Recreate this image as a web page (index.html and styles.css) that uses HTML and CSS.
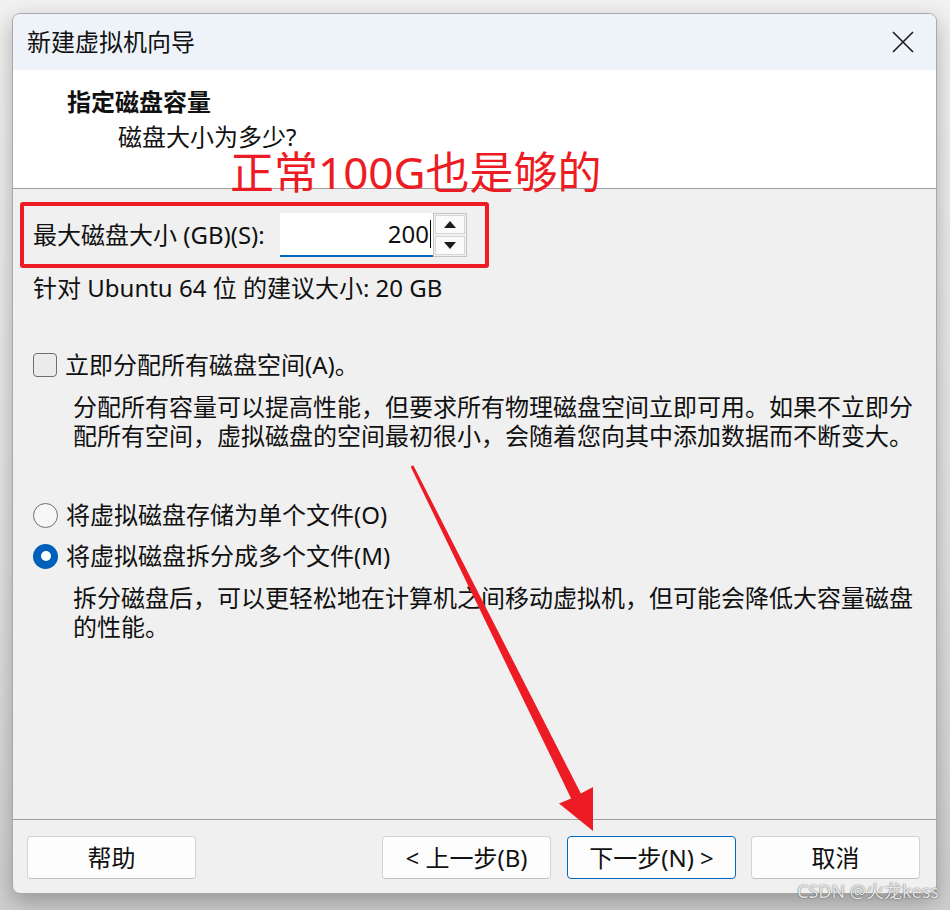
FILE: index.html
```html
<!DOCTYPE html>
<html lang="zh-CN">
<head>
<meta charset="utf-8">
<title>新建虚拟机向导</title>
<link rel="stylesheet" href="styles.css">
</head>
<body>
<div class="window">
  <div class="titlebar">
    <div class="title">新建虚拟机向导</div>
    <div class="close">
      <svg width="22" height="22" viewBox="0 0 22 22"><path d="M1 1 L21 21 M21 1 L1 21" stroke="#1b1b1b" stroke-width="1.6" fill="none"/></svg>
    </div>
  </div>
  <div class="header">
    <div class="heading">指定磁盘容量</div>
    <div class="subheading">磁盘大小为多少?</div>
  </div>
  <div class="content">
    <div class="sizebox">
      <div class="size-label">最大磁盘大小 (GB)(S):</div>
      <div class="size-input"><span class="value">200</span><span class="caret"></span></div>
      <div class="spinner">
        <div class="spin-btn"><svg width="12" height="7" viewBox="0 0 12 7"><path d="M6 0 L12 7 L0 7 Z" fill="#1b1b1b"/></svg></div>
        <div class="spin-btn"><svg width="12" height="7" viewBox="0 0 12 7"><path d="M0 0 L12 0 L6 7 Z" fill="#1b1b1b"/></svg></div>
      </div>
    </div>
    <div class="hint">针对 Ubuntu 64 位 的建议大小: 20 GB</div>
    <div class="option option-check">
      <span class="checkbox"></span>
      <span class="option-label">立即分配所有磁盘空间(A)。</span>
    </div>
    <div class="desc">
      <div class="desc-line">分配所有容量可以提高性能，但要求所有物理磁盘空间立即可用。如果不立即分</div>
      <div class="desc-line">配所有空间，虚拟磁盘的空间最初很小，会随着您向其中添加数据而不断变大。</div>
    </div>
    <div class="option option-radio1">
      <span class="radio"></span>
      <span class="option-label">将虚拟磁盘存储为单个文件(O)</span>
    </div>
    <div class="option option-radio2">
      <span class="radio radio-on"><span class="dot"></span></span>
      <span class="option-label">将虚拟磁盘拆分成多个文件(M)</span>
    </div>
    <div class="desc">
      <div class="desc-line">拆分磁盘后，可以更轻松地在计算机之间移动虚拟机，但可能会降低大容量磁盘</div>
      <div class="desc-line">的性能。</div>
    </div>
  </div>
  <div class="footer">
    <button class="btn">帮助</button>
    <div class="spacer"></div>
    <button class="btn">&lt; 上一步(B)</button>
    <button class="btn btn-primary">下一步(N) &gt;</button>
    <button class="btn btn-last">取消</button>
  </div>
</div>
<div class="note">正常100G也是够的</div>
<svg class="arrow" width="950" height="910" viewBox="0 0 950 910">
  <polygon points="413.3,465.3 580.9,793.6 593,787 593,831 559,803.5 571.1,798.4 410.7,466.7" fill="#ed1c24"/>
</svg>
<div class="watermark">CSDN @火龙kess</div>
</body>
</html>
```

FILE: styles.css
```css
html, body {
  margin: 0;
  padding: 0;
  width: 950px;
  height: 910px;
  overflow: hidden;
}
body {
  position: relative;
  background: linear-gradient(#f1f1f1, #e2e2e2 60%, #cfcfcf);
  font-family: "Noto Sans", "Noto Sans CJK SC", sans-serif;
  color: #111;
}
.window {
  box-sizing: border-box;
  margin: 13px 0 0 12px;
  width: 925px;
  height: 881px;
  border: 1px solid #a9a9a9;
  border-radius: 8px;
  overflow: hidden;
  background: #f0f0f0;
  display: flex;
  flex-direction: column;
  box-shadow: 0 8px 22px rgba(0, 0, 0, 0.28);
}
.titlebar {
  height: 56px;
  flex: 0 0 56px;
  background: #eef3f9;
  display: flex;
  align-items: center;
}
.title {
  padding-left: 14px;
  font-size: 24px;
  line-height: 30px;
  flex: 1;
}
.close {
  width: 66px;
  height: 56px;
  display: flex;
  align-items: center;
  justify-content: center;
}
.header {
  box-sizing: border-box;
  flex: 0 0 119px;
  height: 119px;
  background: #fff;
  border-bottom: 1px solid #a0a0a0;
  padding-top: 17px;
}
.heading {
  padding-left: 54px;
  font-size: 24px;
  line-height: 30px;
  font-weight: 700;
}
.subheading {
  margin-top: 5px;
  padding-left: 105px;
  font-size: 24px;
  line-height: 30px;
}
.content {
  flex: 1;
  font-size: 24px;
}
.sizebox {
  box-sizing: border-box;
  margin: 13px 0 0 7px;
  width: 469px;
  height: 66px;
  border: 4px solid #ed1c24;
  border-radius: 3px;
  display: flex;
  align-items: center;
  padding-left: 9px;
}
.size-label {
  flex: 0 0 247px;
  line-height: 30px;
}
.size-input {
  box-sizing: border-box;
  width: 153px;
  height: 44px;
  background: #fff;
  border-bottom: 2px solid #0067c0;
  display: flex;
  align-items: center;
  justify-content: flex-end;
  padding-right: 2px;
}
.value {
  line-height: 30px;
}
.caret {
  width: 1px;
  height: 28px;
  background: #000;
  margin-left: 1px;
}
.spinner {
  box-sizing: border-box;
  width: 34px;
  height: 44px;
  border: 1px solid #c4c4c4;
  display: flex;
  flex-direction: column;
  background: #f0f0f0;
}
.spin-btn {
  flex: 1;
  margin: 1px;
  background: #fafafa;
  border: 1px solid #d6d6d6;
  display: flex;
  align-items: center;
  justify-content: center;
}
.hint {
  margin-top: 5px;
  padding-left: 20px;
  line-height: 30px;
}
.option {
  display: flex;
  align-items: center;
  padding-left: 20px;
  line-height: 30px;
}
.option-check { margin-top: 47px; }
.option-radio1 { margin-top: 50px; }
.option-radio2 { margin-top: 11px; }
.option-label {
  margin-left: 8px;
}
.checkbox {
  box-sizing: border-box;
  width: 24px;
  height: 24px;
  border: 1.5px solid #6e6e6e;
  border-radius: 4px;
  background: #ebebeb;
}
.radio {
  box-sizing: border-box;
  width: 25px;
  height: 25px;
  border: 1.5px solid #6e6e6e;
  border-radius: 50%;
  background: #f7f7f7;
  display: flex;
  align-items: center;
  justify-content: center;
}
.radio-on {
  border: none;
  background: #005fb8;
}
.dot {
  width: 10px;
  height: 10px;
  border-radius: 50%;
  background: #fff;
}
.desc {
  margin-top: 12px;
  padding-left: 60px;
}
.desc-line {
  height: 29px;
  line-height: 29px;
  white-space: nowrap;
}
.footer {
  box-sizing: border-box;
  flex: 0 0 74px;
  border-top: 1px solid #a0a0a0;
  display: flex;
  align-items: flex-start;
  padding: 16px 16px 0 14px;
}
.spacer { flex: 1; }
.btn {
  box-sizing: border-box;
  width: 169px;
  height: 43px;
  background: #fdfdfd;
  border: 1px solid #d3d3d3;
  border-bottom-color: #c2c2c2;
  border-radius: 4px;
  font-family: "Noto Sans", "Noto Sans CJK SC", sans-serif;
  font-size: 24px;
  line-height: 30px;
  color: #111;
  padding: 0;
  margin-left: 16px;
}
.btn:first-child { margin-left: 0; }
.btn-primary { border: 1px solid #0067c0; }
.btn-last { margin-left: 15px; }
.note {
  position: absolute;
  left: 230px;
  top: 152px;
  font-family: "Noto Sans", "Noto Sans CJK SC", sans-serif;
  font-size: 44px;
  line-height: 40px;
  color: #ed1c24;
  white-space: nowrap;
}
.arrow {
  position: absolute;
  left: 0;
  top: 0;
}
.watermark {
  position: absolute;
  left: 797px;
  top: 879px;
  font-family: "Noto Sans", "Noto Sans CJK SC", sans-serif;
  font-size: 18px;
  line-height: 24px;
  color: rgba(250, 250, 250, 0.9);
  text-shadow: 0 0 1px rgba(0, 0, 0, 0.55), 0 0 2px rgba(0, 0, 0, 0.3);
  white-space: nowrap;
}
```
